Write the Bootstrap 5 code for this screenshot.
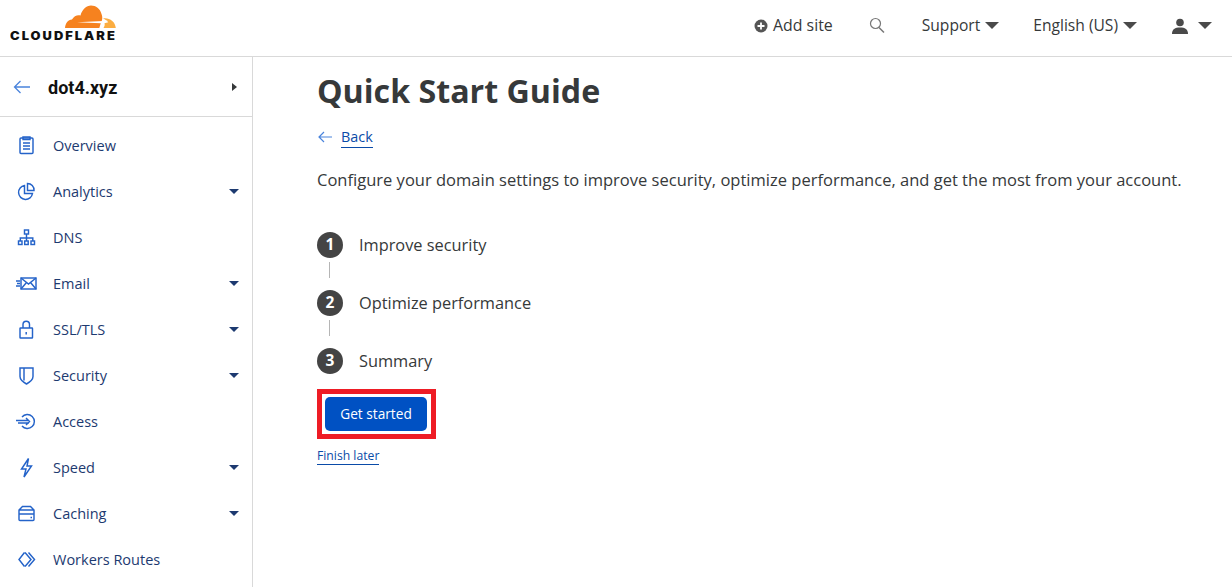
<!doctype html>
<html lang="en"><head><meta charset="utf-8"><title>Quick Start Guide</title>
<link href="https://cdn.jsdelivr.net/npm/bootstrap@5.3.0/dist/css/bootstrap.min.css" rel="stylesheet">
<style>
html,body{height:100%;overflow:hidden}
body{font-family:"Open Sans","Noto Sans",sans-serif;color:#36393a;background:#fff;font-size:15px}
.topbar{height:57px;border-bottom:1px solid #d9d9d9}
.logo-box{width:106px;margin-left:10px;height:56px}
.logo-word{font-family:Inter,"Liberation Sans",sans-serif;font-weight:900;font-size:11.5px;letter-spacing:1.8px;color:#111;line-height:12px;white-space:nowrap;transform:scaleX(1.12);transform-origin:left center}
.logo-cloud{margin-left:55px;margin-top:5px;display:block;margin-bottom:2px}
.top-nav{padding-bottom:4px}
.top-item{font-size:15.6px;color:#36393a;white-space:nowrap}
.top-add{font-size:15.9px}
.top-search{margin-left:35px}
.top-support{margin-left:36px;gap:5px}
.top-lang{margin-left:34px;gap:5px}
.top-user{margin-left:35px;margin-top:1px}
.caret-big{width:0;height:0;border-left:7px solid transparent;border-right:7px solid transparent;border-top:7px solid #4a4a4a;display:inline-block}
.caret-end{margin:0 20px 0 10px}
.add-ico{margin-right:5px}
.shell{height:530px}
.side{width:253px;border-right:1px solid #d9d9d9;flex:none}
.side-head{height:60px;border-bottom:1px solid #d9d9d9;padding:0 15px 0 13px}
.zone-name{font-family:Roboto,"Liberation Sans",sans-serif;font-weight:700;font-size:18px;color:#111;margin-left:18px;padding-top:2px}
.caret-right{width:0;height:0;border-top:4px solid transparent;border-bottom:4px solid transparent;border-left:5px solid #36393a}
.side-nav{padding-top:5px}
.side-link{height:46px;color:#1d3a70;font-size:14.5px;text-decoration:none;padding:0 13px 0 16px}
.side-link span{padding-top:1px}
.side-ico{width:21px;height:21px;margin-right:16px;flex:none}
.side-ico *{fill:none;stroke:#2463c9;stroke-width:1.45}
.caret-small{width:0;height:0;border-left:5px solid transparent;border-right:5px solid transparent;border-top:5px solid #1d3a70}
.content{padding-left:64px;min-width:0}
.page-title{font-size:32.2px;font-weight:700;color:#36393a;line-height:44px;margin:12px 0 0;font-family:"Open Sans",sans-serif}
.back-row{margin-top:12px;height:24px;font-size:14.4px;padding-left:1px}
.back-ico{margin-right:9px}
.under-link{color:#0a4ba8;text-decoration:none;border-bottom:1px solid #0a4ba8}
.intro{font-size:16.53px;margin:19px 0 0;line-height:24px;white-space:nowrap}
.step-list{margin-top:37px}
.step-row{height:32px;font-size:16.35px}
.step-num{width:26px;height:26px;border-radius:50%;background:#444;color:#fff;font-weight:700;font-size:15.5px;margin-right:16px;flex:none}
.step-line{width:1px;height:16px;background:#b5b5b5;margin:1px 0 9px 12px}
.mark-box{border:5px solid #ee1c25;width:119px;height:50px;padding:3px;margin-top:12px}
.go-btn{background:#0051c3;color:#fff;border:0;border-radius:5px;height:34px;width:102px;font-size:13.7px;padding:0;display:block}
.later{display:inline-block;font-size:12.2px;margin-top:8px;line-height:17px}
</style></head>
<body>
<header class="topbar d-flex align-items-center justify-content-between">
  <div class="logo-box">
    <svg class="logo-cloud" width="51" height="23" viewBox="0 0 51 23"><path fill="#f6821f" d="M0 23C.4 18 3 15 7 14.500 9 11 12.500 9.500 15.500 10.500 17 4.500 21.500 .5 26 .5c5 0 9 3 10.500 8.500.8 2 1 4 .5 6L35 23z"/><path fill="#fbad41" d="M38 13.500c6-1.200 12.300 3 12.800 9.500H38.500c1-1.500 1.500-3 1-4.700l3.800-1c-1-1.500-3-3-5.300-3.800z"/><path fill="#fff" d="M12 17.200l26-1.200 5-.7-5 1.700-1.500 7H34l1.800-5.700z"/></svg>
    <div class="logo-word">CLOUDFLARE</div>
  </div>
  <nav class="top-nav d-flex align-items-center">
    <span class="top-item top-add d-flex align-items-center"><svg width="14" height="14" viewBox="0 0 14 14" class="add-ico"><circle cx="7" cy="7" r="6.500" fill="#555"/><path d="M7 3.500v7M3.500 7h7" stroke="#fff" stroke-width="1.800"/></svg>Add site</span>
    <svg class="top-search" width="18" height="18" viewBox="0 0 18 18"><circle cx="7.500" cy="6.500" r="5" fill="none" stroke="#777" stroke-width="1.200"/><path d="M11 10.500l5 5" stroke="#777" stroke-width="1.500"/></svg>
    <span class="top-item top-support d-flex align-items-center">Support <i class="caret-big"></i></span>
    <span class="top-item top-lang d-flex align-items-center">English (US) <i class="caret-big"></i></span>
    <svg class="top-user" width="16" height="16" viewBox="0 0 16 16"><circle cx="8" cy="4.500" r="3.800" fill="#4a4a4a"/><path d="M0 16c0-5 3-6.500 8-6.500s8 1.500 8 6.500z" fill="#4a4a4a"/></svg>
    <i class="caret-big caret-end"></i>
  </nav>
</header>
<div class="shell d-flex">
  <aside class="side">
    <div class="side-head d-flex align-items-center">
      <svg width="17" height="14" viewBox="0 0 17 14"><path d="M17 7H1.500M7.500 1L1.500 7l6 6" fill="none" stroke="#4a84dc" stroke-width="1.300"/></svg>
      <span class="zone-name flex-grow-1">dot4.xyz</span><i class="caret-right"></i>
    </div>
    <div class="side-nav">
      <a class="side-link d-flex align-items-center" href="#"><svg class="side-ico" viewBox="0 0 21 21"><rect x="4" y="3" width="13" height="15.500" rx="1"/><path d="M7 2h7v2.500H7zM7 8h7M7 11h7M7 14h7"/></svg><span class="flex-grow-1">Overview</span></a>
      <a class="side-link d-flex align-items-center" href="#"><svg class="side-ico" viewBox="0 0 21 21"><path d="M8.500 4.500a7 7 0 1 0 8 8h-8z"/><path d="M11.500 2.500a6.500 6.500 0 0 1 6.500 7h-6.500z"/></svg><span class="flex-grow-1">Analytics</span><i class="caret-small"></i></a>
      <a class="side-link d-flex align-items-center" href="#"><svg class="side-ico" viewBox="0 0 21 21"><rect x="8.500" y="3" width="4" height="4"/><rect x="2.500" y="14" width="3.500" height="3.500"/><rect x="8.700" y="14" width="3.500" height="3.500"/><rect x="15" y="14" width="3.500" height="3.500"/><path d="M10.500 7v7M4.300 14v-3h12.500v3"/></svg><span class="flex-grow-1">DNS</span></a>
      <a class="side-link d-flex align-items-center" href="#"><svg class="side-ico" viewBox="0 0 21 21"><rect x="5" y="5" width="15" height="11"/><path d="M5 5l7.500 6 7.500-6M5 16l5.500-6.500M20 16l-5.500-6.500M0 8h4M1 10.500h3M0 13h4"/></svg><span class="flex-grow-1">Email</span><i class="caret-small"></i></a>
      <a class="side-link d-flex align-items-center" href="#"><svg class="side-ico" viewBox="0 0 21 21"><rect x="4" y="9" width="12.500" height="10" rx=".5"/><path d="M7 9V5.500a3.200 3.200 0 0 1 6.500 0V9M10.200 13v2.500"/></svg><span class="flex-grow-1">SSL/TLS</span><i class="caret-small"></i></a>
      <a class="side-link d-flex align-items-center" href="#"><svg class="side-ico" viewBox="0 0 21 21"><path d="M4 3h13v8.500c0 3.500-3 5.500-6.500 7.500C7 17 4 15 4 11.500zM8 3v12.500"/></svg><span class="flex-grow-1">Security</span><i class="caret-small"></i></a>
      <a class="side-link d-flex align-items-center" href="#"><svg class="side-ico" viewBox="0 0 21 21"><path d="M6 6a7 7 0 1 1 0 9M0 9.500h13M2 12h11M10 7l3.500 3.500L10 14"/></svg><span class="flex-grow-1">Access</span></a>
      <a class="side-link d-flex align-items-center" href="#"><svg class="side-ico" viewBox="0 0 21 21"><path d="M12.500 1.500L5.500 12h4.500l-2 8 7.500-11h-4.500z"/></svg><span class="flex-grow-1">Speed</span><i class="caret-small"></i></a>
      <a class="side-link d-flex align-items-center" href="#"><svg class="side-ico" viewBox="0 0 21 21"><path d="M6.500 3.500h8l3.500 3.500v4H3V7zM3 7h15M3 11h15v5.500a1 1 0 0 1-1 1H4a1 1 0 0 1-1-1zM14.500 14.500h1.500"/></svg><span class="flex-grow-1">Caching</span><i class="caret-small"></i></a>
      <a class="side-link d-flex align-items-center" href="#"><svg class="side-ico" viewBox="0 0 21 21"><path d="M8.500 3.500L3 10.500l5.500 7M9 3.500l6 7-6 7M12.500 3.500l6 7-6 7"/></svg><span class="flex-grow-1">Workers Routes</span></a>
    </div>
  </aside>
  <main class="content flex-grow-1">
    <h1 class="page-title">Quick Start Guide</h1>
    <div class="back-row d-flex align-items-center"><svg width="14" height="12" viewBox="0 0 14 12" class="back-ico"><path d="M14 6H1M6 1L1 6l5 5" fill="none" stroke="#4a84dc" stroke-width="1.200"/></svg><a href="#" class="under-link">Back</a></div>
    <p class="intro">Configure your domain settings to improve security, optimize performance, and get the most from your account.</p>
    <div class="step-list">
      <div class="step-row d-flex align-items-center"><span class="step-num d-flex align-items-center justify-content-center">1</span>Improve security</div>
      <div class="step-line"></div>
      <div class="step-row d-flex align-items-center"><span class="step-num d-flex align-items-center justify-content-center">2</span>Optimize performance</div>
      <div class="step-line"></div>
      <div class="step-row d-flex align-items-center"><span class="step-num d-flex align-items-center justify-content-center">3</span>Summary</div>
    </div>
    <div class="mark-box"><button class="go-btn" type="button">Get started</button></div>
    <a href="#" class="under-link later">Finish later</a>
  </main>
</div>
<script src="https://cdn.jsdelivr.net/npm/bootstrap@5.3.0/dist/js/bootstrap.bundle.min.js"></script>
</body></html>
